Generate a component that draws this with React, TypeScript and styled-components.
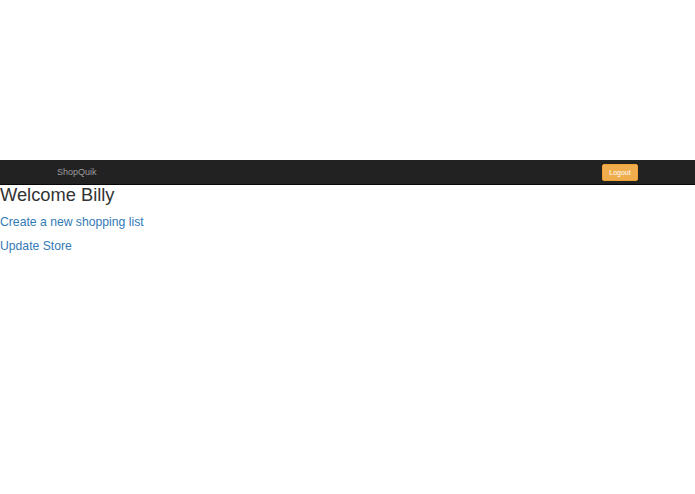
import { createGlobalStyle } from "styled-components";
import styled from "styled-components";

const GlobalStyle = createGlobalStyle`
  html, body {
    margin: 0;
    padding: 0;
    background: #fff;
    font-family: "Liberation Sans", Arial, sans-serif;
    color: #333;
  }
`;

const TopSpace = styled.div`
  height: 160px;
`;

const Navbar = styled.nav`
  height: 25px;
  box-sizing: border-box;
  background: #222;
  border-bottom: 1px solid #080808;
  display: flex;
  align-items: center;
  padding: 0 57px;
  justify-content: space-between;
`;

const Brand = styled.a`
  font-size: 9px;
  color: #9d9d9d;
  text-decoration: none;
`;

const LogoutBtn = styled.button`
  background: #f0ad4e;
  border: 1px solid #eea236;
  border-radius: 2px;
  color: #fff;
  font-family: "Liberation Sans", Arial, sans-serif;
  font-size: 7px;
  height: 17px;
  width: 36px;
  padding: 0;
`;

const Content = styled.main`
  display: flex;
  flex-direction: column;
  align-items: flex-start;
`;

const Title = styled.h1`
  margin: 0;
  font-size: 18.3px;
  font-weight: 400;
  line-height: 20px;
`;

const NavLink = styled.a`
  font-size: 12.2px;
  color: #337ab7;
  text-decoration: none;
  line-height: 14px;
  margin-top: 10px;
`;

export default function App() {
  return (
    <>
      <GlobalStyle />
      <TopSpace />
      <Navbar>
        <Brand href="#">ShopQuik</Brand>
        <LogoutBtn type="button">Logout</LogoutBtn>
      </Navbar>
      <Content>
        <Title>Welcome Billy</Title>
        <NavLink href="#">Create a new shopping list</NavLink>
        <NavLink href="#">Update Store</NavLink>
      </Content>
    </>
  );
}
